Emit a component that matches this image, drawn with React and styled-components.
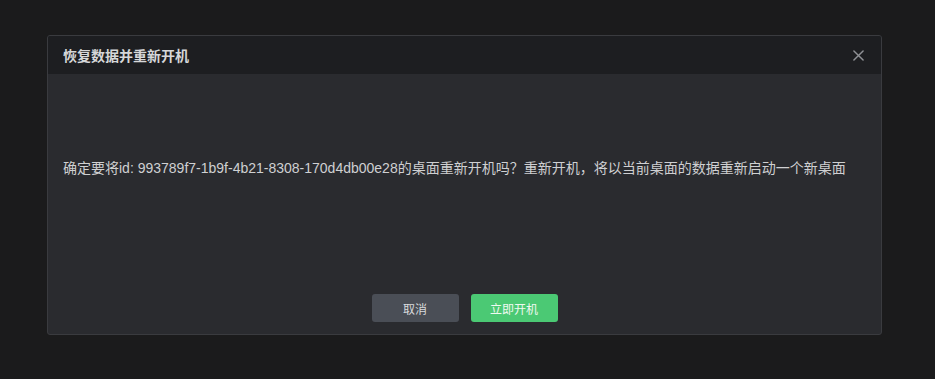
import React from 'react';
import styled, { createGlobalStyle } from 'styled-components';

const GlobalStyle = createGlobalStyle`
  html, body {
    margin: 0;
    padding: 0;
    background: #1b1b1c;
  }
  body {
    font-family: "Liberation Sans", "Noto Sans CJK SC", sans-serif;
    -webkit-font-smoothing: antialiased;
  }
`

const Page = styled.div `
  width: 935px;
  height: 379px;
  box-sizing: border-box;
  padding: 35px 0 0 47px;
  background: #1b1b1c;
`

const Dialog = styled.div `
  width: 835px;
  height: 300px;
  box-sizing: border-box;
  display: flex;
  flex-direction: column;
  background: #2a2b2f;
  border: 1px solid #3a3b3f;
  border-radius: 3px;
  overflow: hidden;
`

const Header = styled.div `
  height: 38px;
  flex-shrink: 0;
  display: flex;
  align-items: center;
  justify-content: space-between;
  padding: 0 16px 0 15px;
  background: #1d1e21;
`

const Title = styled.h3 `
  margin: 0;
  font-size: 14px;
  font-weight: 700;
  color: #d6d7d9;
`

const CloseButton = styled.button `
  border: none;
  background: transparent;
  padding: 0;
  width: 14px;
  height: 14px;
  display: flex;
  align-items: center;
  justify-content: center;
  cursor: pointer;
`

const Body = styled.div `
  height: 186px;
  display: flex;
  align-items: center;
  padding: 0 15px;
  font-size: 14px;
  color: #cfd0d2;
  white-space: nowrap;
`

const Footer = styled.div `
  flex: 1;
  display: flex;
  justify-content: center;
  align-items: flex-end;
  gap: 12px;
  padding-bottom: 12px;
`

const Button = styled.button `
  width: 87px;
  height: 28px;
  border: none;
  border-radius: 3px;
  font-family: inherit;
  font-size: 12px;
  cursor: pointer;
  background: ${p => p.primary ? '#4bc974' : '#4a4e56'};
  color: ${p => p.primary ? '#eef9f1' : '#d9dadd'};
`

function CloseIcon() {
  return (
    <svg width="11" height="11" viewBox="0 0 12 12">
      <path d="M1 1 L11 11 M11 1 L1 11" stroke="#8f9195" strokeWidth="1.6" strokeLinecap="round" />
    </svg>
  )
}

export default function App() {
  return (
    <Page>
      <GlobalStyle />
      <Dialog>
        <Header>
          <Title>恢复数据并重新开机</Title>
          <CloseButton aria-label="close"><CloseIcon /></CloseButton>
        </Header>
        <Body>
          确定要将id: 993789f7-1b9f-4b21-8308-170d4db00e28的桌面重新开机吗？重新开机，将以当前桌面的数据重新启动一个新桌面
        </Body>
        <Footer>
          <Button>取消</Button>
          <Button primary>立即开机</Button>
        </Footer>
      </Dialog>
    </Page>
  )
}
